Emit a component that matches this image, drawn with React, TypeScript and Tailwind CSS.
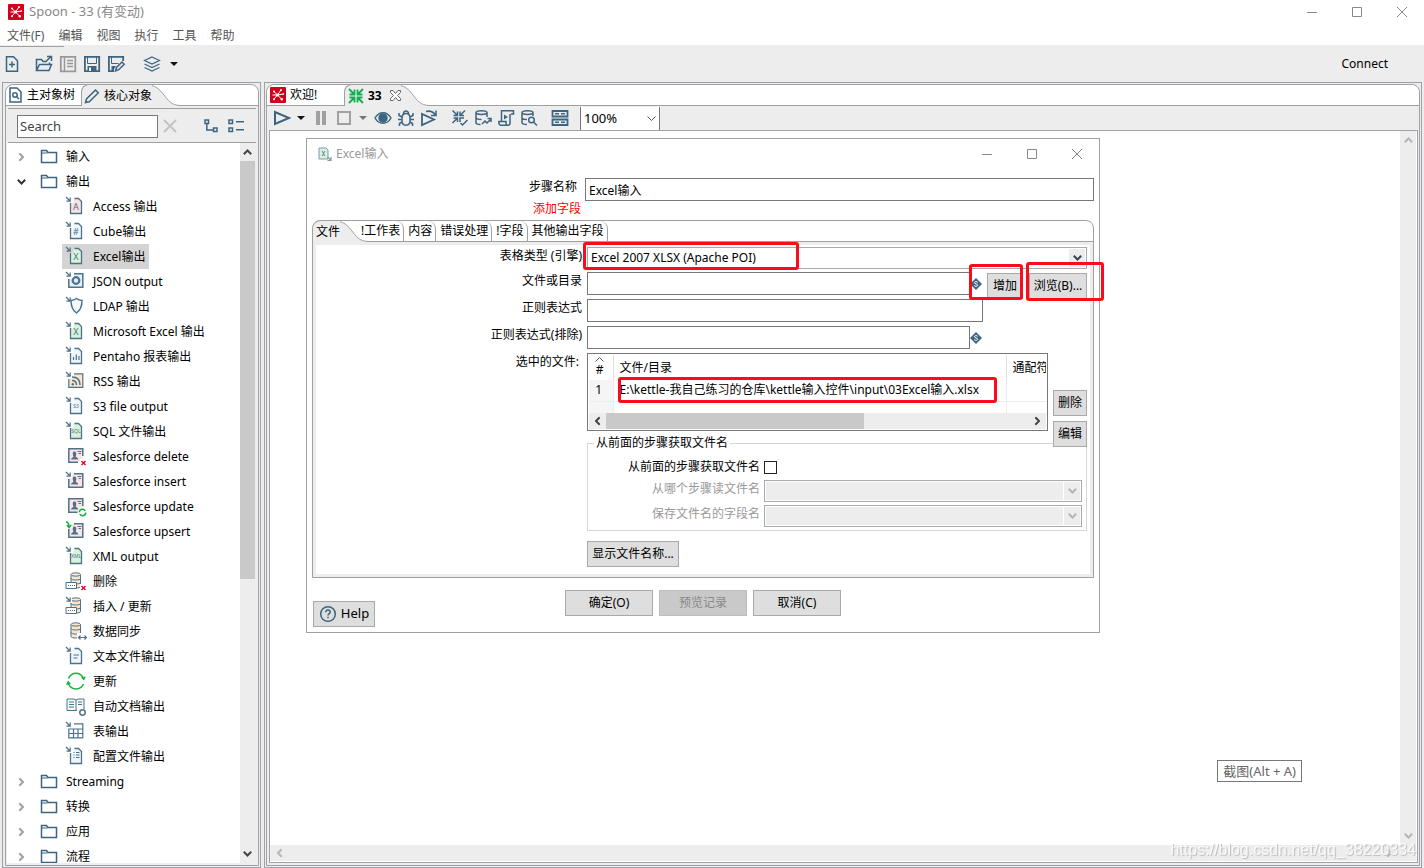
import React, { useState } from 'react';

interface IconProps {
  size?: number;
  className?: string;
  children?: React.ReactNode;
}

// Shared wrapper for all of the line icons
const Icon: React.FC<IconProps> = ({ size = 18, className = 'text-[#3d6480]', children }) => (
  <svg
    width={size}
    height={size}
    viewBox={`0 0 ${size} ${size}`}
    fill="none"
    stroke="currentColor"
    strokeWidth="1.5"
    className={`shrink-0 ${className}`}
    aria-hidden="true"
  >
    {children}
  </svg>
);

const Logo = () => (
  <svg width="16" height="16" viewBox="0 0 16 16" className="shrink-0" aria-hidden="true">
    <rect width="16" height="16" rx="1" fill="#d0021b" />
    <path d="M7.500 8L4 4.500M7.500 8l3.500-5M7.500 8l6-1M7.500 8l4 4M7.500 8l-3.500 4M7.500 8H2.500" stroke="#fff" />
    <circle cx="4" cy="4.500" r="1" fill="#fff" />
    <circle cx="11" cy="3" r="1" fill="#fff" />
    <circle cx="13.300" cy="7" r=".8" fill="#fff" />
    <circle cx="11.800" cy="12.200" r="1.200" fill="#fff" />
    <circle cx="4" cy="12.200" r="1" fill="#fff" />
    <circle cx="7.500" cy="8" r="1.500" fill="#fff" />
  </svg>
);

const Caret = ({ className = 'text-[#111]' }) => (
  <svg width="8" height="4" viewBox="0 0 8 4" className={className} aria-hidden="true">
    <path d="M0 0h8L4 4z" fill="currentColor" />
  </svg>
);

const Chevron = ({ className = '' }) => (
  <svg width="9" height="6" viewBox="0 0 9 6" fill="none" stroke="currentColor" strokeWidth="2" className={className} aria-hidden="true">
    <path d="M.8.8L4.500 4.500 8.200.8" />
  </svg>
);

const Folder = () => (
  <Icon size={18}>
    <path d="M1.500 14.500v-12h5l1.500 2h8.500v10z" />
    <path d="M1.500 5h6" strokeWidth="1" />
  </Icon>
);

const Variable = () => (
  <svg width="12" height="12" viewBox="0 0 12 12" className="shrink-0" aria-hidden="true">
    <path d="M6 0l6 6-6 6-6-6z" fill="#3d6480" />
    <path d="M7.800 4.300C7 3.300 4.500 3.300 4.400 4.700 4.400 6.200 7.800 5.600 7.700 7.300 7.500 8.700 5 8.700 4.200 7.600" stroke="#fff" fill="none" />
  </svg>
);

// The slanted right edge of a selected tab
const TabCurve = () => (
  <svg width="37" height="22" viewBox="0 0 37 22" className="-ml-2 shrink-0" aria-hidden="true">
    <path d="M0 .5C12 .5 16 6 20 11S27 21.500 37 21.500L37 22H0z" fill="#ededed" />
    <path d="M0 .5C12 .5 16 6 20 11S27 21.500 37 21.500" fill="none" stroke="#a0a0a0" />
  </svg>
);

const Arrow = () => <path d="M1 1l4 4M5.200 1.500v3.700H1.500" strokeWidth="1.2" />;

const DocIcon = ({ fill, label }: { fill: string; label?: string }) => (
  <>
    <Arrow />
    <path d="M5.500 7v10.500h11V5.500l-3-3H8.500V7z" fill={fill} stroke="none" />
    <path d="M5.500 7v10.500h11V5.500l-3-3H9.500" strokeWidth="1.300" />
    {label && (
      <text
        x="11"
        y={label.length > 1 ? 12 : 13.5}
        textAnchor="middle"
        fontSize={label.length > 1 ? 5 : 9}
        fill="currentColor"
        stroke="none"
      >
        {label}
      </text>
    )}
  </>
);

const CardIcon = ({ cut }: { cut?: boolean }) => (
  <>
    <path d="M3.800 2.800h14v13.500h-14z" fill="#fde4e4" stroke="none" />
    <path d={cut ? 'M9 2.800h8.800v13.500h-14V8' : 'M13 16.300H3.800V2.800h14V10'} />
    <path d="M6 13.500c0-2 2-2 2.500-2.800C7 7 8 5.500 9.500 5.500S12 7 10.700 10.700c1 .8 2.500.8 2.500 2.800z" fill="currentColor" stroke="none" />
    <path d="M12.500 5.500h4M13.500 7.500h2.500" strokeWidth="1" />
  </>
);

const Cylinder = () => (
  <>
    <path d="M6 3.500v12c0 2 9.500 2 9.500 0v-12" fill="#fbe5cb" strokeWidth="1" />
    <ellipse cx="10.750" cy="3.500" rx="4.750" ry="1.700" fill="#fbe5cb" strokeWidth="1" />
    <path d="M6 7.500c0 2 9.500 2 9.500 0M6 11.500c0 2 9.500 2 9.500 0" strokeWidth="1" />
  </>
);

const RowBox = () => (
  <>
    <path d="M1 11.500h10.500v6H1z" fill="#fff" strokeWidth="1" />
    <path d="M3 14.500h7" strokeWidth="1" strokeDasharray="1 1" />
  </>
);

const RedCross = () => <path d="M16.500 15l4 4M20.500 15l-4 4" stroke="#e4002b" strokeWidth="1.400" />;

const stepIcons: Record<string, React.ReactNode> = {
  access: <DocIcon fill="#fde0e0" label="A" />,
  cube: <DocIcon fill="#eef6fb" label="#" />,
  excel: <DocIcon fill="#d9f2da" label="X" />,
  json: (
    <>
      <Arrow />
      <path d="M9 2.800h8.800v13.500h-14V8L9 7z" fill="#e3eef7" stroke="none" />
      <path d="M9 2.800h8.800v13.500h-14V8" />
      <circle cx="11" cy="9.500" r="3.300" strokeWidth="2.200" />
    </>
  ),
  ldap: (
    <>
      <Arrow />
      <path d="M11.500 2.500c-2 1.500-3 1.800-5.500 2 0 6 1 9.500 5.500 12.500 4.500-3 5.500-6.500 5.500-12.500-2.500-.2-3.500-.5-5.500-2z" fill="#f2f8fc" />
    </>
  ),
  report: (
    <>
      <DocIcon fill="#eef6fb" />
      <path d="M8.500 14v-3M11.300 14V8.500M14 14V10" strokeWidth="1.200" />
    </>
  ),
  rss: (
    <>
      <Arrow />
      <path d="M9 2.800h8.800v13.500h-14V8L9 7z" fill="#fbe5cb" stroke="none" />
      <path d="M9 2.800h8.800v13.500h-14V8" strokeWidth="1.200" />
      <path d="M7 9.500c3 0 4.500 1.500 4.500 4.500M7 6c5 0 8 3 8 8" />
      <circle cx="7.800" cy="13.200" r="1.200" fill="currentColor" stroke="none" />
    </>
  ),
  s3: <DocIcon fill="#eef6fb" label="S3" />,
  sql: <DocIcon fill="#d9f2da" label="SQL" />,
  xml: <DocIcon fill="#d9f2da" label="XML" />,
  sfDelete: (
    <>
      <CardIcon />
      <path d="M15 13h7v7h-7z" fill="#fff" stroke="none" />
      <RedCross />
    </>
  ),
  sfInsert: (
    <>
      <CardIcon cut />
      <path d="M0 0h7v7H0z" fill="#fff" stroke="none" />
      <Arrow />
    </>
  ),
  sfUpdate: (
    <>
      <CardIcon />
      <circle cx="17.500" cy="16.500" r="5" fill="#fff" stroke="none" />
      <circle cx="17.500" cy="16.500" r="3.200" stroke="#12b53e" strokeDasharray="8 2" />
    </>
  ),
  sfUpsert: (
    <>
      <CardIcon cut />
      <path d="M0 0h7v7H0z" fill="#fff" stroke="none" />
      <path d="M1 1c2 0 3 1 3 5M2 4l2 2.500L6.300 4" stroke="#12b53e" />
    </>
  ),
  dbDelete: (
    <>
      <Cylinder />
      <RowBox />
      <path d="M15 13h7v7h-7z" fill="#fff" stroke="none" />
      <RedCross />
    </>
  ),
  dbInsert: (
    <>
      <Cylinder />
      <path d="M0 0h7v7H0z" fill="#fff" stroke="none" />
      <RowBox />
      <Arrow />
    </>
  ),
  dbSync: (
    <>
      <Cylinder />
      <path d="M12 12h10v7H12z" fill="#fff" stroke="none" />
      <path d="M14 16.500h7M15.500 14.500l-2 2 2 2M19.500 14.500l2 2-2 2" strokeWidth="1.200" />
    </>
  ),
  text: (
    <>
      <DocIcon fill="#eef6fb" />
      <path d="M8.500 9h5.500M8.500 12h4" strokeWidth="1" />
    </>
  ),
  update: (
    <>
      <path d="M3.500 7.500c3-7 12-7 15 0M18.500 13c-3 6.500-12 6.500-15 0" stroke="#12b53e" />
      <path d="M16 6.500l3 3 1.800-4zM6 13l-3-3.500L1 14z" fill="#12b53e" stroke="none" />
    </>
  ),
  autodoc: (
    <>
      <path d="M2 3h7l2 1 2-1h6v10M2 3v11.500h10M11 4v10" fill="#f2f8fc" strokeWidth="1" />
      <path d="M4 6h5M4 8.500h5M4 11h5M13 6h4M13 8.500h4" strokeWidth="1" />
      <circle cx="17.500" cy="16.500" r="2.700" fill="#fff" />
    </>
  ),
  table: (
    <>
      <Arrow />
      <path d="M9 2.800h8.800v14h-14V8h14M8.500 8v9M13 8v9M4 12.500h14" strokeWidth="1.200" />
    </>
  ),
  config: (
    <>
      <DocIcon fill="#eef6fb" />
      <path d="M8.500 6.500h1M11 6.500h3.500M8.500 9h1M11 9h3.500M8.500 11.500h1M11 11.500h3.500" strokeWidth="1" />
    </>
  ),
};

const outputSteps = [
  { icon: 'access', label: 'Access 输出' },
  { icon: 'cube', label: 'Cube输出' },
  { icon: 'excel', label: 'Excel输出' },
  { icon: 'json', label: 'JSON output' },
  { icon: 'ldap', label: 'LDAP 输出' },
  { icon: 'excel', label: 'Microsoft Excel 输出' },
  { icon: 'report', label: 'Pentaho 报表输出' },
  { icon: 'rss', label: 'RSS 输出' },
  { icon: 's3', label: 'S3 file output' },
  { icon: 'sql', label: 'SQL 文件输出' },
  { icon: 'sfDelete', label: 'Salesforce delete' },
  { icon: 'sfInsert', label: 'Salesforce insert' },
  { icon: 'sfUpdate', label: 'Salesforce update' },
  { icon: 'sfUpsert', label: 'Salesforce upsert' },
  { icon: 'xml', label: 'XML output' },
  { icon: 'dbDelete', label: '删除' },
  { icon: 'dbInsert', label: '插入 / 更新' },
  { icon: 'dbSync', label: '数据同步' },
  { icon: 'text', label: '文本文件输出' },
  { icon: 'update', label: '更新' },
  { icon: 'autodoc', label: '自动文档输出' },
  { icon: 'table', label: '表输出' },
  { icon: 'config', label: '配置文件输出' },
];

const folders = [
  { label: '输入', steps: [] },
  { label: '输出', steps: outputSteps },
  { label: 'Streaming', steps: [] },
  { label: '转换', steps: [] },
  { label: '应用', steps: [] },
  { label: '流程', steps: [] },
];

const menus = ['文件(F)', '编辑', '视图', '执行', '工具', '帮助'];

const WindowButtons = () => (
  <div className="flex text-[#888]">
    <button type="button" aria-label="Minimize" className="flex h-6 w-[45px] items-center justify-center">
      <svg width="10" height="10" viewBox="0 0 10 10" stroke="currentColor"><path d="M0 5.500h10" /></svg>
    </button>
    <button type="button" aria-label="Maximize" className="flex h-6 w-[45px] items-center justify-center">
      <svg width="10" height="10" viewBox="0 0 10 10" stroke="currentColor" fill="none"><path d="M.5.5h9v9h-9z" /></svg>
    </button>
    <button type="button" aria-label="Close" className="flex h-6 w-[45px] items-center justify-center">
      <svg width="10" height="10" viewBox="0 0 10 10" stroke="currentColor"><path d="M0 0l10 10M10 0L0 10" /></svg>
    </button>
  </div>
);

interface ToolButtonProps {
  label: string;
  className?: string;
  children: React.ReactNode;
}

const ToolButton: React.FC<ToolButtonProps> = ({ label, className = 'w-6', children }) => (
  <button type="button" aria-label={label} className={`flex h-6 shrink-0 items-center justify-center ${className}`}>
    {children}
  </button>
);

const MainToolbar = () => (
  <div className="flex h-[37px] shrink-0 flex-col bg-[#ededed]">
    <div className="mt-px h-px w-16 shrink-0 bg-[#a0a0a0]" />
    <div className="flex flex-1 items-center pb-px">
      <ToolButton label="New">
        <Icon>
          <path d="M3.500 1.800h7l4 4v10.500h-11zM9 6.500v6M6 9.500h6" />
        </Icon>
      </ToolButton>
      <div className="flex pl-2">
        <ToolButton label="Open">
          <Icon>
            <path d="M1.500 15.500v-11h5l1.500 2h3M1.500 15.500l3-6h12l-2.500 6zM10.500 7l5-5M12 1.500h4.500V6M14.500 7.500v2" />
          </Icon>
        </ToolButton>
        <ToolButton label="Explore repository">
          <Icon className="text-[#999]">
            <path d="M1.800 1.800h14.500v14.500H1.800z" strokeWidth="1.800" />
            <path d="M5.500 2v14M8 5.500h6M8 8.500h6M8 11.500h6" />
          </Icon>
        </ToolButton>
        <ToolButton label="Save">
          <Icon>
            <path d="M1.900 1.900h14.300v14.300H1.900z" strokeWidth="1.800" />
            <path d="M4.500 2v6.500h9V2" strokeWidth="1" />
            <path d="M4.500 11h9v5.500h-9z" fill="currentColor" stroke="none" />
            <path d="M6 12.500h2V16H6z" fill="#ededed" stroke="none" />
          </Icon>
        </ToolButton>
        <ToolButton label="Save as">
          <Icon>
            <path d="M7 16.200H1.900V1.900h14.300V6" strokeWidth="1.800" />
            <path d="M4.500 2v6.500h7" strokeWidth="1" />
            <path d="M4.500 11H9l-2 3v2.500H4.500z" fill="currentColor" stroke="none" />
            <path d="M8.500 16l1-3.500L15 7l2.200 2.200-5.500 5.500z" fill="#ededed" />
          </Icon>
        </ToolButton>
      </div>
      <div className="flex items-center gap-0.5 pl-3">
        <ToolButton label="Perspective">
          <Icon>
            <path d="M9 2l7.500 3.500L9 9 1.500 5.500zM1.500 9L9 12.500 16.500 9M1.500 12.500L9 16l7.500-3.500" strokeWidth="1.200" />
          </Icon>
        </ToolButton>
        <ToolButton label="Choose perspective" className="w-4">
          <Caret />
        </ToolButton>
      </div>
      <button type="button" className="ml-auto pr-9 text-black">Connect</button>
    </div>
  </div>
);

const Sidebar = () => {
  const [selected, setSelected] = useState('Excel输出');
  const [open, setOpen] = useState('输出');

  return (
    <aside className="flex w-[259px] shrink-0 border border-[#a0a0a8] p-px pl-0.5">
      <div className="flex min-w-0 flex-1 flex-col rounded-t-lg border border-[#a0a0a8]">
        {/* Tabs */}
        <div className="flex h-[21px] shrink-0 rounded-t-lg border-b border-[#a0a0a0] bg-white">
          <button type="button" className="flex w-[75px] items-center gap-[3px] pl-0.5">
            <Icon size={16}>
              <path d="M2 1h7l4 4v10H2z" />
              <circle cx="7" cy="8" r="2.200" />
              <path d="M8.500 9.500L11 12" />
            </Icon>
            <span className="whitespace-nowrap">主对象树</span>
          </button>
          <div className="-mt-px flex h-[22px]">
            <button type="button" className="z-10 flex items-center gap-1 rounded-tl-lg border-t border-l border-[#a0a0a0] bg-[#ededed] pl-0.5">
              <Icon size={16}>
                <path d="M1.500 14.500L2.500 11 11.500 2l2.800 2.800-9 9z" />
              </Icon>
              <span className="whitespace-nowrap">核心对象</span>
            </button>
            <TabCurve />
          </div>
        </div>

        <div className="mx-0.5 mt-0.5 flex h-[35px] shrink-0 items-center border-y border-[#a0a0a0] pt-px pl-[9px]">
          <input
            type="text"
            aria-label="Search"
            placeholder="Search"
            className="h-[23px] w-[141px] border border-[#777] bg-white px-0.5 text-[13px] placeholder:text-[#444] focus:outline-none"
          />
          <ToolButton label="Clear">
            <Icon className="text-[#c4c4c4]">
              <path d="M3 3l12 12M15 3L3 15" strokeWidth="2" />
            </Icon>
          </ToolButton>
          <div className="flex pl-[18px]">
            <ToolButton label="Expand all">
              <Icon>
                <path d="M2 3h3.500v3.500H2zM10.500 11H14v3.500h-3.500zM3.800 7v6H10" />
              </Icon>
            </ToolButton>
            <ToolButton label="Collapse all">
              <Icon>
                <path d="M2 3h3.500v3.500H2zM2 11h3.500v3.500H2zM9 4.800h8M9 12.800h8" />
              </Icon>
            </ToolButton>
          </div>
        </div>

        {/* Steps tree */}
        <div className="mb-0.5 ml-px flex min-h-0 flex-1 bg-white">
          <ul className="min-w-0 flex-1 overflow-hidden pt-px">
            {folders.map((folder) => (
              <li key={folder.label}>
                <button
                  type="button"
                  onClick={() => setOpen(open === folder.label ? '' : folder.label)}
                  className="flex h-[25px] w-full items-center pl-2"
                >
                  <span className="flex w-[13px] justify-center">
                    <Chevron className={open === folder.label ? 'text-[#333]' : '-rotate-90 text-[#a0a0a0]'} />
                  </span>
                  <span className="pr-2 pl-3">
                    <Folder />
                  </span>
                  {folder.label}
                </button>
                {open === folder.label && (
                  <ul>
                    {folder.steps.map((step) => (
                      <li key={step.label} className="flex h-[25px] pl-[55px]">
                        <button
                          type="button"
                          onClick={() => setSelected(step.label)}
                          className={`flex items-center gap-1.5 pr-1 pl-[3px] whitespace-nowrap ${
                            selected === step.label ? 'bg-[#d4d4d4]' : ''
                          }`}
                        >
                          <Icon size={22} className="text-[#4f728b]">{stepIcons[step.icon]}</Icon>
                          {step.label}
                        </button>
                      </li>
                    ))}
                  </ul>
                )}
              </li>
            ))}
          </ul>
          <div className="flex w-[15px] shrink-0 flex-col items-center bg-[#ededed] text-[#444]">
            <Chevron className="my-1.5 rotate-180" />
            <div className="h-[58%] w-full bg-[#c9c9c9]" />
            <Chevron className="mt-auto mb-1.5" />
          </div>
          <div className="w-[3px] bg-[#ededed]" />
        </div>
      </div>
    </aside>
  );
};

const DisabledSelect = ({ id }: { id: string }) => (
  <div className="relative flex-1">
    <select id={id} disabled className="block h-[22px] w-full appearance-none border border-[#a9a9b0] bg-[#ededed] shadow-[inset_0_0_0_1px_#fff]" />
    <span className="pointer-events-none absolute inset-y-px right-0.5 flex w-[17px] items-center justify-center border-l border-white text-[#b5b5b5]">
      <Chevron />
    </span>
  </div>
);

const dialogTabs = ['!工作表', '内容', '错误处理', '!字段', '其他输出字段'];

const fieldClass = 'block h-[23px] w-full min-w-0 border border-[#777] bg-white px-[3px] focus:outline-none';
const buttonClass = 'h-[26px] border border-[#a9a9a9] bg-[#dedede] whitespace-nowrap text-black';

interface FormRowProps {
  label: string;
  htmlFor: string;
  className?: string;
  children: React.ReactNode;
}

const FormRow: React.FC<FormRowProps> = ({ label, htmlFor, className = 'h-[27px]', children }) => (
  <div className={`flex items-start gap-[5px] ${className}`}>
    <label htmlFor={htmlFor} className="w-[266px] shrink-0 text-right leading-[18px] whitespace-nowrap">{label}</label>
    {children}
  </div>
);

const FileTable = () => (
  <div className="flex h-[78px] w-[461px] shrink-0 flex-col border border-[#777] bg-white p-px">
    <div className="min-h-0 flex-1 overflow-hidden">
      <table id="selected-files" className="w-full table-fixed border-collapse text-left whitespace-nowrap">
        <thead>
          <tr className="h-[25px]">
            <th className="w-6 border-r border-[#e0e0e0] p-0 font-normal">
              <span className="flex flex-col items-center pr-0.5 leading-4">
                <svg width="9" height="5" viewBox="0 0 9 5" fill="none" stroke="#555" aria-hidden="true">
                  <path d="M.5 4.500l4-4 4 4" />
                </svg>
                #
              </span>
            </th>
            <th className="w-[393px] border-r border-[#e0e0e0] p-0 pl-1.5 font-normal">文件/目录</th>
            <th className="overflow-hidden p-0 pl-1.5 font-normal">通配符</th>
          </tr>
        </thead>
        <tbody>
          <tr className="h-[21px] border-b border-[#ededed]">
            <td className="border-r border-[#e6eef8] bg-[#f5f5f5] p-0 pr-1 text-center">1</td>
            <td className="border-r border-[#e6eef8] p-0 pl-1.5">E:\kettle-我自己练习的仓库\kettle输入控件\input\03Excel输入.xlsx</td>
            <td className="p-0" />
          </tr>
          <tr className="h-[21px]">
            <td className="border-r border-[#e6eef8] bg-[#f5f5f5] p-0" />
            <td className="border-r border-[#e6eef8] p-0" />
            <td className="p-0" />
          </tr>
        </tbody>
      </table>
    </div>
    <div className="flex h-4 shrink-0 items-center bg-[#ededed] text-[#444]">
      <span className="flex w-[17px] justify-center"><Chevron className="rotate-90" /></span>
      <div className="h-full w-[258px] bg-[#c9c9c9]" />
      <span className="ml-auto flex w-[17px] justify-center"><Chevron className="-rotate-90" /></span>
    </div>
  </div>
);

const ExcelInputDialog = () => {
  const [stepName, setStepName] = useState('Excel输入');

  return (
    <section className="absolute top-[7px] left-9 w-[794px] border border-[#a0a0a0] bg-white">
      <div className="flex h-[29px] items-center pl-[11px] text-[#999]">
        <Icon size={14} className="text-[#7d9aab]">
          <path d="M1 1h7l2 2v9H1z" fill="#d9f2da" strokeWidth="1" />
          <path d="M4 4l3 5M7 4L4 9M9.500 10l3 3M13 10v3.500H9.500" strokeWidth="1.200" />
        </Icon>
        <h2 className="pl-1">Excel输入</h2>
        <div className="ml-auto">
          <WindowButtons />
        </div>
      </div>

      <div className="mt-2.5 flex items-start gap-2 pr-[5px]">
        <label htmlFor="step-name" className="w-[270px] shrink-0 text-right leading-[18px]">步骤名称</label>
        <input id="step-name" type="text" value={stepName} onChange={(e) => setStepName(e.target.value)} className={fieldClass} />
      </div>
      <p className="w-[274px] text-right leading-4 text-[#f00]">添加字段</p>

      {/* Tab folder */}
      <div className="mx-[5px] mt-[3px] rounded-t-lg border border-[#a0a0a0]">
        <div className="flex h-[21px] rounded-t-lg border-b border-[#a0a0a0]">
          <div className="-mt-px flex h-[22px]">
            <button type="button" className="z-10 rounded-tl-lg border-t border-[#a0a0a0] bg-[#ededed] pl-[3px]">文件</button>
            <TabCurve />
          </div>
          <div className="-ml-3 flex">
            {dialogTabs.map((tab) => (
              <button key={tab} type="button" className="z-10 rounded-tr-lg border-r border-[#a0a0a0] pr-[3px] pl-1 whitespace-nowrap">{tab}</button>
            ))}
          </div>
        </div>

        <div className="border-[3px] border-[#ededed] bg-white pt-0.5 pr-[3px] pb-[7px]">
          <FormRow label="表格类型 (引擎)" htmlFor="engine" className="h-[25px]">
            <div className="relative flex-1">
              <select id="engine" className="block h-[22px] w-full appearance-none border border-[#a9a9b0] bg-white px-[3px] focus:outline-none">
                <option>Excel 2007 XLSX (Apache POI)</option>
              </select>
              <span className="pointer-events-none absolute inset-y-0.5 right-0.5 flex w-4 items-center justify-center bg-[#ededed] text-[#444]">
                <Chevron />
              </span>
            </div>
          </FormRow>
          <FormRow label="文件或目录" htmlFor="file-or-dir">
            <div className="flex flex-1 items-center">
              <input id="file-or-dir" type="text" className={fieldClass} />
              <Variable />
              <div className="flex h-[23px] items-start gap-1.5 pt-px pl-[5px]">
                <button type="button" className={`w-9 ${buttonClass}`}>增加</button>
                <button type="button" className={`w-[58px] ${buttonClass}`}>浏览(B)...</button>
              </div>
            </div>
          </FormRow>
          <FormRow label="正则表达式" htmlFor="regexp">
            <div className="flex-1 pr-[104px]">
              <input id="regexp" type="text" className={fieldClass} />
            </div>
          </FormRow>
          <FormRow label="正则表达式(排除)" htmlFor="exclude-regexp">
            <div className="flex flex-1 items-center pr-[105px]">
              <input id="exclude-regexp" type="text" className={fieldClass} />
              <Variable />
            </div>
          </FormRow>
          <div className="flex h-[81px] items-start gap-[5px]">
            <span className="w-[266px] shrink-0 pr-[3px] text-right leading-[18px]">选中的文件:</span>
            <FileTable />
            <div className="z-10 flex flex-1 flex-col gap-[5px] pt-[37px]">
              <button type="button" className={buttonClass}>删除</button>
              <button type="button" className={buttonClass}>编辑</button>
            </div>
          </div>

          <fieldset className="ml-[271px] flex flex-col border border-[#d6d6d6] pr-1 pb-[3px]">
            <legend className="ml-1.5 px-0.5 leading-[18px]">从前面的步骤获取文件名</legend>
            <div className="flex items-center gap-1 pt-1.5">
              <label htmlFor="accept-files" className="w-[172px] text-right leading-[18px]">从前面的步骤获取文件名</label>
              <input id="accept-files" type="checkbox" className="h-[13px] w-[13px] appearance-none border border-[#222] bg-white checked:bg-[#3d6480]" />
            </div>
            <div className="flex items-start gap-1 pt-1">
              <label htmlFor="source-step" className="w-[172px] text-right leading-[18px] text-[#999]">从哪个步骤读文件名</label>
              <DisabledSelect id="source-step" />
            </div>
            <div className="flex items-start gap-1 pt-[3px]">
              <label htmlFor="source-field" className="w-[172px] text-right leading-[18px] text-[#999]">保存文件名的字段名</label>
              <DisabledSelect id="source-field" />
            </div>
          </fieldset>
          <button type="button" className={`mt-2.5 ml-[271px] block w-[92px] ${buttonClass}`}>显示文件名称...</button>
        </div>
      </div>

      <div className="grid grid-cols-[1fr_auto_1fr] items-start px-1.5 pt-3 pb-[5px]">
        <button type="button" className={`mt-[11px] flex w-[62px] items-center justify-center gap-1 text-[13px] ${buttonClass}`}>
          <Icon>
            <circle cx="9" cy="9" r="7.300" />
            <path d="M6.800 7.300c0-3 4.600-2.800 4.400-.2C11.100 8.600 9 8.700 9 10.500M9 11.800v1.500" />
          </Icon>
          Help
        </button>
        <div className="flex gap-1.5">
          <button type="button" className={`w-[88px] ${buttonClass}`}>确定(O)</button>
          <button type="button" disabled className="h-[26px] w-[88px] border border-[#bdbdbd] bg-[#c9c9c9] text-[#888]">预览记录</button>
          <button type="button" className={`w-[88px] ${buttonClass}`}>取消(C)</button>
        </div>
      </div>

      {/* Highlight marks laid over the form */}
      <div className="pointer-events-none absolute top-[103px] left-[276px] z-20 h-7 w-[216px] rounded-[3px] border-3 border-[#fc0b1b]" />
      <div className="pointer-events-none absolute top-[125px] left-[662px] z-20 h-9 w-[54px] rounded-[3px] border-3 border-[#fc0b1b]" />
      <div className="pointer-events-none absolute top-[123px] left-[719px] z-20 h-[39px] w-[78px] rounded-[3px] border-3 border-[#fc0b1b]" />
      <div className="pointer-events-none absolute top-[238px] left-[311px] z-20 h-[26px] w-[379px] rounded-[3px] border-3 border-[#fc0b1b]" />
    </section>
  );
};

const toolClass = 'w-[23px]';

const EditorToolbar = () => (
  <div className="flex h-6 shrink-0 items-center pl-[3px]">
    <ToolButton label="Run" className={toolClass}>
      <Icon><path d="M2 3v12l14-6z" strokeWidth="2" /></Icon>
    </ToolButton>
    <ToolButton label="Run options" className="w-4"><Caret /></ToolButton>
    <ToolButton label="Pause" className={toolClass}>
      <Icon className="text-[#a0a0a0]"><path d="M6 2v14M12 2v14" strokeWidth="4" /></Icon>
    </ToolButton>
    <ToolButton label="Stop" className={toolClass}>
      <Icon className="text-[#a0a0a0]"><path d="M3 3h12v12H3z" strokeWidth="2" /></Icon>
    </ToolButton>
    <ToolButton label="Stop options" className="w-4"><Caret className="text-[#777]" /></ToolButton>
    <ToolButton label="Preview" className={toolClass}>
      <Icon>
        <path d="M1 9c4-7 12-7 16 0-4 7-12 7-16 0z" />
        <circle cx="9" cy="9" r="4" fill="currentColor" />
      </Icon>
    </ToolButton>
    <ToolButton label="Debug" className={toolClass}>
      <Icon>
        <path d="M5 9c0-6 8-6 8 0v3c0 5.500-8 5.500-8 0zM6.500 5C6 1 12 1 11.500 5M5 8L2 6.500V4M13 8l3-1.500V4M5 10.500H1M13 10.500h4M5 13l-2.500 1.500V17M13 13l2.500 1.500V17" />
      </Icon>
    </ToolButton>
    <ToolButton label="Replay" className={toolClass}>
      <Icon>
        <path d="M2 5v11l12-5.500z" strokeWidth="1.800" />
        <path d="M6 2.500c4-1 7 0 9 3M16 1.500V6.500H11" />
      </Icon>
    </ToolButton>
    <div className="flex px-2">
      <ToolButton label="Verify" className={toolClass}>
        <Icon>
          <path d="M1.500 1.500L6 6M14 1.500L9.500 6M1.500 14L6 9.500M6.500 2.500v4h-4M9 2.500v4h4M6.500 13V9h-4M9 13V9h4" />
          <path d="M9.500 14l2 2 5-5" />
        </Icon>
      </ToolButton>
      <ToolButton label="Impact" className={toolClass}>
        <Icon>
          <path d="M2 3.500v10c0 1.500 2 2 4.500 2M2 3.500c0-2.500 11-2.500 11 0s-11 2.500-11 0zM13 3.500V8M2 8.500c0 1.500 3 2 5.500 2M8 15l3-3 2 2 4-4M13.500 9.500H17V13" />
        </Icon>
      </ToolButton>
      <ToolButton label="SQL" className={toolClass}>
        <Icon>
          <path d="M4.500 12V1.800h12V5H14M13 5v9c0 3-4 3-4 0v-1.500H1.800c0 3 .5 3.700 2.200 3.700h7" />
          <path d="M7 5.500v5l4-2.500z" fill="currentColor" stroke="none" />
        </Icon>
      </ToolButton>
      <ToolButton label="Explore database" className={toolClass}>
        <Icon>
          <path d="M2 3.500v10c0 1.500 2 2 5 2M2 3.500c0-2.500 11-2.500 11 0s-11 2.500-11 0zM13 3.500V7M2 8.500c0 1.500 2 2 5 2" />
          <circle cx="11.500" cy="11" r="2.800" />
          <path d="M13.500 13l3.500 3.500" />
        </Icon>
      </ToolButton>
    </div>
    <ToolButton label="Show results" className={toolClass}>
      <Icon>
        <path d="M1.500 2h15v5.500h-15zM1.500 10.500h15V16h-15z" strokeWidth="1.800" />
        <path d="M4 4.800h4M10 4.800h4M4 13.300h4M10 13.300h4" />
      </Icon>
    </ToolButton>
    <div className="relative ml-[9px] pt-px">
      <select aria-label="Zoom" className="block h-[23px] w-20 appearance-none border-x border-[#777] bg-white px-[3px] text-[13px] focus:outline-none">
        <option>100%</option>
      </select>
      <svg width="9" height="6" viewBox="0 0 9 6" fill="none" stroke="#555" className="pointer-events-none absolute top-2.5 right-1" aria-hidden="true">
        <path d="M.5.5l4 4 4-4" />
      </svg>
    </div>
  </div>
);

const Editor = () => (
  <main className="flex min-w-0 flex-1 border border-[#a0a0a8] p-px">
    <div className="flex min-w-0 flex-1 flex-col rounded-t-lg border border-[#a0a0a8] pr-px">
      {/* Open transformations */}
      <div className="-mr-px flex h-[21px] shrink-0 rounded-t-lg border-b border-[#a0a0a0] bg-white">
        <button type="button" className="flex w-[77px] items-center gap-1 pl-[3px]">
          <Logo />
          欢迎!
        </button>
        <div className="-mt-px flex h-[22px]">
          <button type="button" className="z-10 flex items-center gap-1 rounded-tl-lg border-t border-l border-[#a0a0a0] bg-[#ededed] pl-[3px]">
            <Icon size={16} className="text-[#10b050]">
              <path d="M1 1l5 5M15 1l-5 5M1 15l5-5M15 15l-5-5M6.500 1.500v5h-5M9.500 1.500v5h5M6.500 14.500v-5h-5M9.500 14.500v-5h5" strokeWidth="1.800" />
            </Icon>
            <span className="font-bold">33</span>
          </button>
          <button type="button" aria-label="Close tab" className="z-10 border-t border-[#a0a0a0] bg-[#ededed] pl-2">
            <svg width="11" height="11" viewBox="0 0 11 11" fill="#fff" stroke="#666" aria-hidden="true">
              <path d="M.5.5h2.500l2.500 3 2.500-3h2.500v2l-3 3 3 3v2H8l-2.500-3-2.500 3H.5v-2l3-3-3-3z" />
            </svg>
          </button>
          <TabCurve />
        </div>
      </div>
      <EditorToolbar />

      {/* Canvas */}
      <div className="mb-0.5 ml-0.5 flex min-h-0 flex-1 flex-col border border-[#a0a0a8] bg-white p-px pt-0 pl-0">
        <div className="flex min-h-0 flex-1">
          <div className="relative min-w-0 flex-1">
            <ExcelInputDialog />
            <div className="absolute right-[98px] bottom-[63px] border border-[#777] bg-white px-[5px] text-[13px] leading-5 whitespace-nowrap text-[#666]">
              截图(Alt + A)
            </div>
          </div>
          <div className="flex w-4 shrink-0 flex-col items-center justify-between bg-[#ededed] pt-1.5 text-[#b5b5b5]">
            <Chevron className="rotate-180" />
            <Chevron className="mb-1.5" />
          </div>
        </div>
        <div className="flex h-4 shrink-0 items-center justify-between bg-[#ededed] pr-[22px] pl-[5px] text-[#b5b5b5]">
          <Chevron className="rotate-90" />
          <Chevron className="-rotate-90" />
        </div>
      </div>
    </div>
  </main>
);

const App = () => (
  <div className="flex h-screen flex-col overflow-hidden bg-white font-['Noto_Sans','Noto_Sans_CJK_SC',sans-serif] text-xs text-black">
    <header className="shrink-0">
      <div className="flex h-[23px] items-center pl-2 text-[#888]">
        <Logo />
        <h1 className="pl-[5px] text-[13px]">Spoon - 33 (有变动)</h1>
        <div className="ml-auto">
          <WindowButtons />
        </div>
      </div>
      <nav className="flex h-[22px] items-center gap-3.5 px-[7px] pt-1 text-[#555]">
        {menus.map((menu) => (
          <button key={menu} type="button">{menu}</button>
        ))}
      </nav>
    </header>
    <MainToolbar />
    <div className="flex min-h-0 flex-1 gap-[3px] bg-[#ededed] pr-0.5 pl-0.5">
      <Sidebar />
      <Editor />
    </div>
    <span className="pointer-events-none fixed right-2 bottom-1.5 z-30 font-['Liberation_Sans',sans-serif] text-base text-white/80 [text-shadow:1px_1px_1px_#bbb]">
      https://blog.csdn.net/qq_38220334
    </span>
  </div>
);

export default App;
